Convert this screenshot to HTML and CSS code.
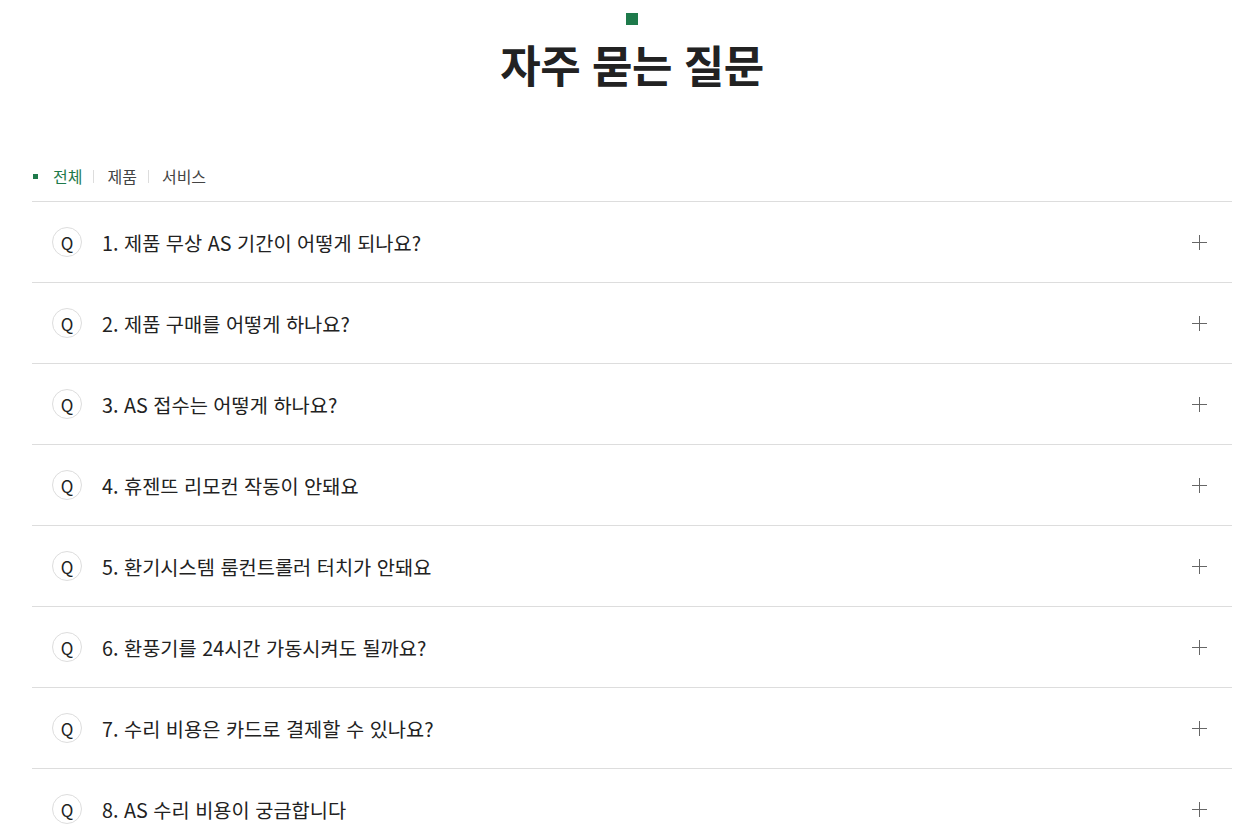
FILE: index.html
```html
<!DOCTYPE html>
<html lang="ko">
<head>
<meta charset="utf-8">
<title>자주 묻는 질문</title>
<link rel="stylesheet" href="styles.css">
</head>
<body>
<main class="wrap">
  <header class="head">
    <span class="head-mark"></span>
    <h1 class="title">자주 묻는 질문</h1>
  </header>
  <nav class="tabs">
    <span class="tab-mark"></span>
    <a class="tab active" href="#">전체</a>
    <span class="sep"></span>
    <a class="tab" href="#">제품</a>
    <span class="sep"></span>
    <a class="tab" href="#">서비스</a>
  </nav>
  <ul class="faq">
    <li class="item"><span class="q">Q</span><span class="txt">1. 제품 무상 AS 기간이 어떻게 되나요?</span><span class="plus"></span></li>
    <li class="item"><span class="q">Q</span><span class="txt">2. 제품 구매를 어떻게 하나요?</span><span class="plus"></span></li>
    <li class="item"><span class="q">Q</span><span class="txt">3. AS 접수는 어떻게 하나요?</span><span class="plus"></span></li>
    <li class="item"><span class="q">Q</span><span class="txt">4. 휴젠뜨 리모컨 작동이 안돼요</span><span class="plus"></span></li>
    <li class="item"><span class="q">Q</span><span class="txt">5. 환기시스템 룸컨트롤러 터치가 안돼요</span><span class="plus"></span></li>
    <li class="item"><span class="q">Q</span><span class="txt">6. 환풍기를 24시간 가동시켜도 될까요?</span><span class="plus"></span></li>
    <li class="item"><span class="q">Q</span><span class="txt">7. 수리 비용은 카드로 결제할 수 있나요?</span><span class="plus"></span></li>
    <li class="item"><span class="q">Q</span><span class="txt">8. AS 수리 비용이 궁금합니다</span><span class="plus"></span></li>
  </ul>
</main>
</body>
</html>
```
FILE: styles.css
```css
* { box-sizing: border-box; }
html, body { margin: 0; padding: 0; background: #fff; }
body {
  font-family: "Noto Sans CJK KR", "Noto Sans", sans-serif;
  color: #222;
  overflow: hidden;
}
.wrap {
  width: 1200px;
  margin-left: 32px;
}
.head {
  display: flex;
  flex-direction: column;
  align-items: center;
  padding-top: 13px;
}
.head-mark {
  width: 12px;
  height: 12px;
  background: #1e7a4b;
}
.title {
  margin: 11px 0 0;
  font-size: 44px;
  line-height: 56px;
  font-weight: 700;
  color: #222;
  letter-spacing: -0.5px;
}
.tabs {
  display: flex;
  align-items: center;
  margin-top: 73px;
  height: 22px;
  font-size: 16px;
}
.tab-mark {
  width: 5px;
  height: 5px;
  background: #1e7a4b;
  margin: 0 15px 0 1px;
}
.tab {
  color: #444;
  text-decoration: none;
}
.tab.active { color: #1e7a4b; }
.sep {
  width: 1px;
  height: 13px;
  background: #ddd;
  margin: 0 13px 0 11px;
}
.faq {
  list-style: none;
  margin: 14px 0 0;
  padding: 0;
  border-top: 1px solid #ddd;
}
.item {
  display: flex;
  align-items: center;
  height: 81px;
  border-bottom: 1px solid #ddd;
  padding: 0 25px 0 20px;
}
.q {
  width: 30px;
  height: 30px;
  border: 1px solid #ddd;
  border-radius: 50%;
  display: flex;
  align-items: center;
  justify-content: center;
  font-size: 17px;
  color: #222;
  flex: none;
}
.txt {
  margin-left: 20px;
  font-size: 19.75px;
  color: #222;
  flex: 1;
}
.plus {
  position: relative;
  width: 15px;
  height: 15px;
  flex: none;
}
.plus::before, .plus::after {
  content: "";
  position: absolute;
  background: #666;
}
.plus::before { left: 0; right: 0; top: 7px; height: 1px; }
.plus::after { top: 0; bottom: 0; left: 7px; width: 1px; }
```
